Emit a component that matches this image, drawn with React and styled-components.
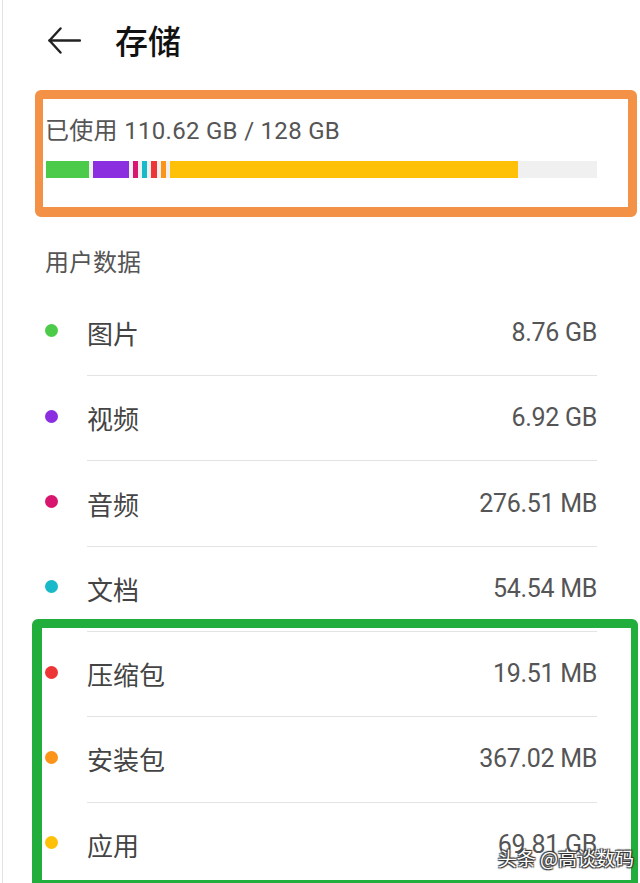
import React from 'react'
import styled, { createGlobalStyle } from 'styled-components'

const GlobalStyle = createGlobalStyle`
    html, body{
        margin:0;
        padding:0;
        background:#fff;
    }
    body{
        font-family: Roboto, "Noto Sans CJK SC", "Noto Sans", sans-serif;
    }
`

const segments = [
    { color: '#4CCB4A', width: 43 },
    { color: '#8A2EE0', width: 36 },
    { color: '#D8166F', width: 5 },
    { color: '#18B9C9', width: 5 },
    { color: '#EE3535', width: 6 },
    { color: '#FB9419', width: 5 },
    { color: '#FFC107', width: 348 },
]

const items = [
    { name: '图片', size: '8.76 GB', color: '#4CCB4A' },
    { name: '视频', size: '6.92 GB', color: '#8A2EE0' },
    { name: '音频', size: '276.51 MB', color: '#D8166F' },
    { name: '文档', size: '54.54 MB', color: '#18B9C9' },
    { name: '压缩包', size: '19.51 MB', color: '#EE3535' },
    { name: '安装包', size: '367.02 MB', color: '#FB9419' },
    { name: '应用', size: '69.81 GB', color: '#FFC107' },
]

const BackIcon = () => (
    <svg width="33" height="27" viewBox="0 0 33 27" fill="none">
        <path d="M1.5 13.5 H32" stroke="#222" strokeWidth="2.4" strokeLinecap="round" />
        <path d="M12.5 1.5 L1.5 13.5 L12.5 25.5" stroke="#222" strokeWidth="2.4" strokeLinecap="round" strokeLinejoin="round" />
    </svg>
)

const App = () => {
    return (
        <>
            <GlobalStyle />
            <Screen>
                <Header>
                    <BackIcon />
                    <Title>存储</Title>
                </Header>

                <Usage>
                    <UsageText>已使用 110.62 GB / 128 GB</UsageText>
                    <Bar>
                        {segments.map((s, i) => (
                            <Segment key={i} color={s.color} style={{ width: s.width }} />
                        ))}
                    </Bar>
                </Usage>

                <SectionTitle>用户数据</SectionTitle>

                <List>
                    {items.map((el, ind) => (
                        <Row key={ind} first={ind === 0}>
                            <Dot color={el.color} />
                            <Label>{el.name}</Label>
                            <Size>{el.size}</Size>
                        </Row>
                    ))}
                </List>

                <Mark className="orange" />
                <Mark className="green" />
                <Watermark>头条 @高谈数码</Watermark>
            </Screen>
        </>
    )
}

export default App

const Screen = styled.div`
    position:relative;
    width:638px;
    height:883px;
    margin-left:2px;
    overflow:hidden;
    background:#fff;
    box-sizing:border-box;
    border-left:1px solid #e2e2e2;
    padding:0 43px 0 42px;
`

const Header = styled.div`
    height:80px;
    display:flex;
    align-items:center;
    padding-left:3px;
    svg{
        flex-shrink:0;
    }
`

const Title = styled.div`
    margin-left:34px;
    font-size:33px;
    font-weight:500;
    color:#111;
    font-family:"Noto Sans CJK SC", sans-serif;
    line-height:40px;
`

const Usage = styled.div`
    padding-top:36px;
`

const UsageText = styled.div`
    font-size:24px;
    line-height:30px;
    color:#555;
    letter-spacing:0.3px;
`

const Bar = styled.div`
    margin-top:15px;
    margin-left:1px;
    height:17px;
    background:#f0f0f0;
    display:flex;
    gap:4px;
`

const Segment = styled.div`
    height:100%;
    background:${p => p.color};
    flex-shrink:0;
`

const SectionTitle = styled.div`
    margin-top:68px;
    font-size:24px;
    line-height:30px;
    color:#555;
    font-family:"Noto Sans CJK SC", sans-serif;
`

const List = styled.div`
    margin-top:13.7px;
`

const Row = styled.div`
    position:relative;
    height:85.33px;
    display:flex;
    align-items:center;
    &:before{
        content:'';
        display:${p => p.first ? 'none' : 'block'};
        position:absolute;
        top:0;
        left:42px;
        right:0;
        height:1px;
        background:#e3e3e3;
    }
`

const Dot = styled.span`
    width:13px;
    height:13px;
    border-radius:50%;
    background:${p => p.color};
    margin-right:29px;
    margin-top:-3px;
    flex-shrink:0;
`

const Label = styled.span`
    flex:1;
    font-size:26px;
    color:#444;
    font-family:"Noto Sans CJK SC", sans-serif;
`

const Size = styled.span`
    font-size:25px;
    color:#555;
    letter-spacing:-0.3px;
`

const Mark = styled.div`
    position:absolute;
    box-sizing:border-box;
    border-style:solid;
    border-radius:6px;
    pointer-events:none;
    &.orange{
        left:32px;
        top:90px;
        width:602px;
        height:127px;
        border-color:#F39247;
        border-width:9px 9px 10px 8px;
    }
    &.green{
        left:29px;
        top:619px;
        width:606px;
        height:270px;
        border-color:#22AE3C;
        border-width:9px 7px 9px 10px;
    }
`

const Watermark = styled.div`
    position:absolute;
    right:6px;
    bottom:12px;
    font-size:19px;
    color:#fff;
    font-family:"Noto Sans CJK SC", sans-serif;
    text-shadow:
        1px 1px 1px #333,
        -1px -1px 1px #333,
        1px -1px 1px #333,
        -1px 1px 1px #333;
`
